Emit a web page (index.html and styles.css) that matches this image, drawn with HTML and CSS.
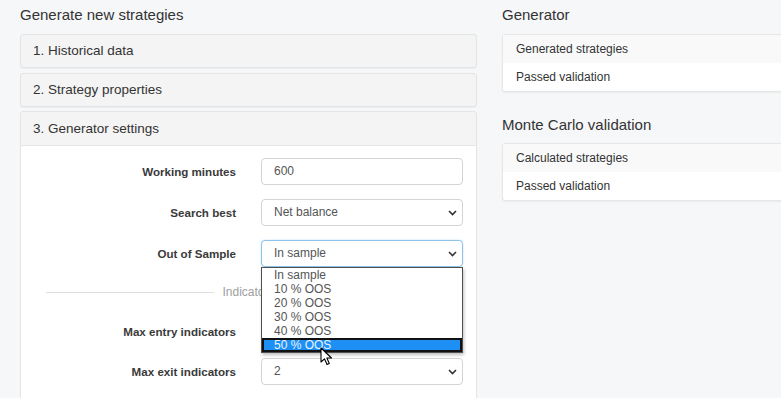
FILE: index.html
```html
<!DOCTYPE html>
<html lang="en">
<head>
  <meta charset="UTF-8">
  <meta name="viewport" content="width=device-width, initial-scale=1.0">
  <title>Generator</title>
  <link rel="stylesheet" href="styles.css">
</head>
<body>
  <div class="page">
    <div class="left">
      <h2 class="title">Generate new strategies</h2>
      <div class="panel">
        <div class="panel-head">1. Historical data</div>
      </div>
      <div class="panel">
        <div class="panel-head">2. Strategy properties</div>
      </div>
      <div class="panel open">
        <div class="panel-head">3. Generator settings</div>
        <div class="panel-body">
          <div class="row">
            <label>Working minutes</label>
            <div class="input">600</div>
          </div>
          <div class="row">
            <label>Search best</label>
            <div class="input select">Net balance
              <svg class="chev" width="9" height="6" viewBox="0 0 9 6"><polyline points="1,1 4.5,4.5 8,1" fill="none" stroke="#333" stroke-width="1.6"/></svg>
            </div>
          </div>
          <div class="row">
            <label>Out of Sample</label>
            <div class="input select focus">In sample
              <svg class="chev" width="9" height="6" viewBox="0 0 9 6"><polyline points="1,1 4.5,4.5 8,1" fill="none" stroke="#333" stroke-width="1.6"/></svg>
              <ul class="dropdown">
                <li>In sample</li>
                <li>10 % OOS</li>
                <li>20 % OOS</li>
                <li>30 % OOS</li>
                <li>40 % OOS</li>
                <li class="selected">50 % OOS</li>
              </ul>
              <svg class="cursor" width="13" height="19" viewBox="0 0 13 19">
                <path d="M1 1 L1 15 L4.5 11.8 L7 17.5 L9.3 16.5 L6.9 11 L11.5 11 Z" fill="#fff" stroke="#000" stroke-width="1.1" stroke-linejoin="round"/>
              </svg>
            </div>
          </div>
          <div class="divider"><span>Indicators</span></div>
          <div class="row tight">
            <label>Max entry indicators</label>
            <div class="input select">2
              <svg class="chev" width="9" height="6" viewBox="0 0 9 6"><polyline points="1,1 4.5,4.5 8,1" fill="none" stroke="#333" stroke-width="1.6"/></svg>
            </div>
          </div>
          <div class="row">
            <label>Max exit indicators</label>
            <div class="input select">2
              <svg class="chev" width="9" height="6" viewBox="0 0 9 6"><polyline points="1,1 4.5,4.5 8,1" fill="none" stroke="#333" stroke-width="1.6"/></svg>
            </div>
          </div>
        </div>
      </div>
    </div>
    <div class="right">
      <h2 class="title">Generator</h2>
      <div class="card">
        <div class="card-row">Generated strategies</div>
        <div class="card-row">Passed validation</div>
      </div>
      <h2 class="title mc">Monte Carlo validation</h2>
      <div class="card">
        <div class="card-row">Calculated strategies</div>
        <div class="card-row">Passed validation</div>
      </div>
    </div>
  </div>
</body>
</html>
```

FILE: styles.css
```css
body {
  margin: 0;
  background-color: #f6f7f9;
  font-family: "Liberation Sans", Arial, sans-serif;
  color: #333;
  overflow: hidden;
  height: 398px;
}
.page {
  display: flex;
  gap: 25px;
  padding: 5px 0 0 20px;
}
.left {
  width: 457px;
  flex: none;
}
.right {
  width: 320px;
  flex: none;
}
.title {
  font-size: 15px;
  font-weight: normal;
  line-height: 20px;
  margin: 0 0 9px;
  color: #333;
}
.title.mc {
  margin-top: 23px;
  margin-bottom: 8px;
}
.panel {
  border: 1px solid #e4e4e4;
  border-radius: 3px;
  background-color: #f4f4f4;
  margin-bottom: 4.5px;
  box-shadow: 0 1px 1px rgba(0, 0, 0, 0.04);
}
.panel-head {
  height: 32px;
  line-height: 32px;
  padding: 0 12px;
  font-size: 13.5px;
}
.panel.open .panel-head {
  height: 33px;
  line-height: 33px;
  border-bottom: 1px solid #e6e6e6;
}
.panel-body {
  background-color: #fff;
  padding: 12px 13px 20px 13px;
}
.row {
  display: grid;
  grid-template-columns: 1fr 202px;
  gap: 25px;
  align-items: center;
  margin-bottom: 14px;
}
.row.tight {
  margin-bottom: 13px;
}
.row label {
  text-align: right;
  font-weight: bold;
  font-size: 11.6px;
  color: #3a3a3a;
}
.input {
  position: relative;
  height: 25px;
  line-height: 25px;
  border: 1px solid #d4d4d4;
  border-radius: 4px;
  background-color: #fff;
  padding: 0 12px;
  font-size: 12px;
  color: #555;
}
.input.focus {
  border-color: #8cc4ea;
  box-shadow: 0 0 2px rgba(102, 175, 233, 0.4);
}
.chev {
  position: absolute;
  right: 5px;
  top: 10px;
}
.divider {
  display: flex;
  align-items: center;
  gap: 8px;
  margin: 0 12px 15px 12px;
  height: 22px;
  font-size: 12px;
  color: #a0a0a0;
}
.divider::before,
.divider::after {
  content: "";
  flex: 1;
  border-top: 1px solid #dedede;
}
.dropdown {
  position: absolute;
  left: -1px;
  top: 26px;
  width: 200px;
  margin: 0;
  padding: 0;
  list-style: none;
  background-color: #fff;
  border: 1px solid #505050;
  box-shadow: 1px 2px 3px rgba(0, 0, 0, 0.25);
  z-index: 5;
}
.dropdown li {
  height: 14px;
  line-height: 14px;
  padding-left: 12px;
  font-size: 12px;
  color: #555;
}
.dropdown li.selected {
  background-color: #1e8ff5;
  color: #e8f3ff;
  outline: 2px solid #111;
  outline-offset: -2px;
}
.cursor {
  position: absolute;
  left: 58px;
  top: 106px;
  z-index: 6;
}
.card {
  border: 1px solid #e6e6e6;
  border-radius: 3px;
  background-color: #fff;
  box-shadow: 0 1px 2px rgba(0, 0, 0, 0.05);
}
.card-row {
  height: 28px;
  line-height: 28px;
  padding: 0 13px;
  font-size: 12px;
  color: #333;
}
.card-row:first-child {
  background-color: #f9f9fa;
}
```
